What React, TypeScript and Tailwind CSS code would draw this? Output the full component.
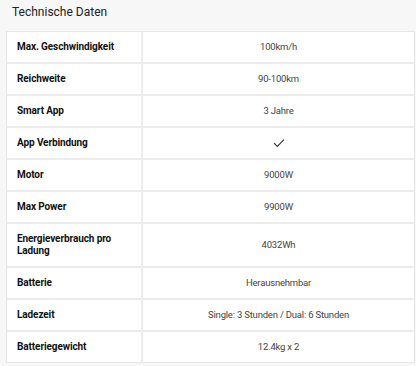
import React from "react";

const rows: [string, React.ReactNode][] = [
  ["Max. Geschwindigkeit", "100km/h"],
  ["Reichweite", "90-100km"],
  ["Smart App", "3 Jahre"],
  [
    "App Verbindung",
    <svg key="c" width="12" height="10" viewBox="0 0 12 10" className="inline-block">
      <path d="M1 5.2 L4.3 8.4 L11 1.6" fill="none" stroke="#333" strokeWidth="1.1" />
    </svg>,
  ],
  ["Motor", "9000W"],
  ["Max Power", "9900W"],
  ["Energieverbrauch pro Ladung", "4032Wh"],
  ["Batterie", "Herausnehmbar"],
  ["Ladezeit", "Single: 3 Stunden / Dual: 6 Stunden"],
  ["Batteriegewicht", "12.4kg x 2"],
];

export default function App() {
  return (
    <div
      className="w-[416px] h-[366px] bg-[#f7f7f7] overflow-hidden"
      style={{ fontFamily: "Roboto, 'Liberation Sans', sans-serif" }}
    >
      <div className="pl-[12px] pt-[4px] h-[31px] text-[12px] leading-[16px] text-[#222]">
        Technische Daten
      </div>
      <div className="ml-[6px] mr-[1px] bg-white border border-[#e6e6e6]">
        {rows.map(([k, v], i) => (
          <div
            key={i}
            className={`flex ${i > 0 ? "border-t-2 border-[#ececec]" : ""}`}
          >
            <div className="w-[136px] shrink-0 border-r-2 border-[#ececec] pl-[10px] pr-[8px] py-[9px] flex items-center text-[10px] leading-[12px] font-bold text-[#111] tracking-[-0.1px]">
              {k}
            </div>
            <div className="flex-1 flex items-center justify-center text-[9.5px] leading-[12px] text-[#444] tracking-[-0.2px]">
              {v}
            </div>
          </div>
        ))}
      </div>
    </div>
  );
}
